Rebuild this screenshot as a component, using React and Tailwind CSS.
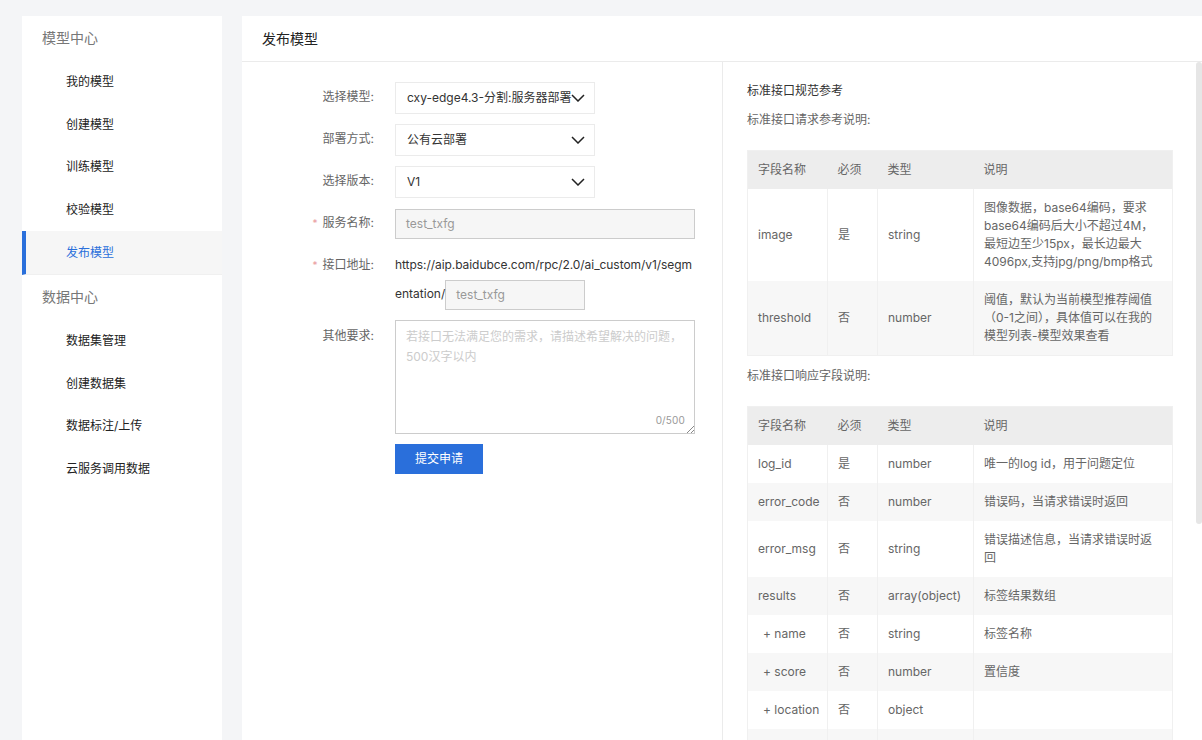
const FONT = "font-['Inter','Noto_Sans_CJK_SC',sans-serif]";

function Chevron() {
  return (
    <svg width="14" height="8" viewBox="0 0 14 8" fill="none" className="absolute right-[9px] top-[11px]">
      <path d="M1 1l6 6 6-6" stroke="#222" strokeWidth="1.5" />
    </svg>
  );
}

function Select({ value }) {
  return (
    <div className="relative flex h-8 w-[200px] items-center border border-[#ebebeb] pl-[11px] text-xs text-[#333]">
      <span className="whitespace-nowrap">{value}</span>
      <Chevron />
    </div>
  );
}

function Label({ text, required, top }) {
  return (
    <div className={`flex w-[133px] shrink-0 justify-end whitespace-nowrap pr-[21px] text-xs leading-[18px] text-[#666] ${top}`}>
      {required && <span className="mr-[5px] text-[10px] text-[#e99a9e]">*</span>}
      {text}:
    </div>
  );
}

function NavItem({ text, active, h = "h-[43px]" }) {
  return active ? (
    <div className="flex h-[44px] items-center border-b border-[#f0f0f0] border-l-4 border-l-[#2a6fdb] bg-[#f6f6f6] pl-10 text-xs text-[#2a6fdb]">{text}</div>
  ) : (
    <div className={`flex ${h} items-center pl-11 text-xs text-[#222]`}>{text}</div>
  );
}

function Table({ rows }) {
  const td = "border-r border-[#f0f0f0] pl-[10px] align-middle";
  return (
    <table className="w-[425px] table-fixed border-collapse border border-[#f0f0f0] text-xs text-[#666]">
      <colgroup>
        <col className="w-[80px]" />
        <col className="w-[50px]" />
        <col className="w-[96px]" />
        <col className="w-[199px]" />
      </colgroup>
      <thead>
        <tr className="h-[38px] bg-[#ededed] text-left">
          <th className="pl-[10px] font-normal">字段名称</th>
          <th className="pl-[10px] font-normal">必须</th>
          <th className="pl-[10px] font-normal">类型</th>
          <th className="pl-[10px] font-normal">说明</th>
        </tr>
      </thead>
      <tbody>
        {rows.map((r, i) => (
          <tr key={i} className={i % 2 ? "bg-[#f7f7f7]" : "bg-white"} style={{ height: r[4] }}>
            <td className={`${td} whitespace-nowrap`}>
              {r[5] ? <span className="pl-[5px]">{r[0]}</span> : r[0]}
            </td>
            <td className={td}>{r[1]}</td>
            <td className={`${td} whitespace-nowrap`}>{r[2]}</td>
            <td className={`${td} pr-[10px] leading-[18px]`}>{r[3]}</td>
          </tr>
        ))}
      </tbody>
    </table>
  );
}

const T1 = [
  ["image", "是", "string", "图像数据，base64编码，要求base64编码后大小不超过4M，最短边至少15px，最长边最大4096px,支持jpg/png/bmp格式", 92],
  ["threshold", "否", "number", "阈值，默认为当前模型推荐阈值（0-1之间），具体值可以在我的模型列表-模型效果查看", 75],
];

const T2 = [
  ["log_id", "是", "number", "唯一的log id，用于问题定位", 38],
  ["error_code", "否", "number", "错误码，当请求错误时返回", 38],
  ["error_msg", "否", "string", "错误描述信息，当请求错误时返回", 56],
  ["results", "否", "array(object)", "标签结果数组", 38],
  ["+ name", "否", "string", "标签名称", 38, true],
  ["+ score", "否", "number", "置信度", 38, true],
  ["+ location", "否", "object", "", 38, true],
  ["", "", "", "", 38],
];

export default function App() {
  return (
    <div className={`${FONT} flex h-[740px] w-[1202px] gap-5 overflow-hidden bg-[#f4f5f7] pl-[22px] pt-4`}>
      <aside className="h-[724px] w-[200px] shrink-0 bg-white">
        <div className="flex h-11 items-center pl-5 text-sm text-[#777]">模型中心</div>
        <NavItem text="我的模型" />
        <NavItem text="创建模型" />
        <NavItem text="训练模型" h="h-[42px]" />
        <NavItem text="校验模型" />
        <NavItem text="发布模型" active />
        <div className="flex h-[44px] items-center pl-5 text-sm text-[#777]">数据中心</div>
        <NavItem text="数据集管理" />
        <NavItem text="创建数据集" />
        <NavItem text="数据标注/上传" h="h-[42px]" />
        <NavItem text="云服务调用数据" />
      </aside>

      <main className="flex h-[724px] w-[960px] shrink-0 flex-col bg-white">
        <header className="flex h-[46px] shrink-0 items-center border-b border-[#ebebeb] pl-5 text-sm text-[#222]">发布模型</header>
        <div className="flex min-h-0 flex-1">
          <section className="flex w-[481px] shrink-0 flex-col gap-[10px] border-r border-[#ebebeb] pl-5 pt-5">
            <div className="flex"><Label text="选择模型" top="pt-[6px]" /><Select value="cxy-edge4.3-分割:服务器部署" /></div>
            <div className="flex"><Label text="部署方式" top="pt-[6px]" /><Select value="公有云部署" /></div>
            <div className="flex"><Label text="选择版本" top="pt-[6px]" /><Select value="V1" /></div>
            <div className="flex pt-[1px]">
              <Label text="服务名称" required top="pt-[5px]" />
              <div className="flex h-[30px] w-[300px] items-center border border-[#ccc] bg-[#f6f6f6] pl-[10px] text-xs text-[#999]">test_txfg</div>
            </div>
            <div className="flex">
              <Label text="接口地址" required top="pt-[7px]" />
              <div className="w-[300px] text-xs text-[#333]">
                <div className="h-[31px] whitespace-nowrap pt-[7px] leading-[18px] tracking-[-0.06px]">https://aip.baidubce.com/rpc/2.0/ai_custom/v1/segm</div>
                <div className="flex items-center">
                  <span className="relative bottom-[1px]">entation/</span>
                  <div className="flex h-[30px] w-[140px] items-center border border-[#ccc] bg-[#f6f6f6] pl-[10px] text-[#999]">test_txfg</div>
                </div>
              </div>
            </div>
            <div className="flex">
              <Label text="其他要求" top="pt-[7px]" />
              <div className="relative h-[114px] w-[300px] border border-[#ccc] px-[10px] pt-[6px] text-xs leading-5 text-[#ccc]">
                若接口无法满足您的需求，请描述希望解决的问题，500汉字以内
                <span className="absolute bottom-[7px] right-[9px] text-[10px] leading-3 tracking-[0.15px] text-[#999]">0/500</span>
                <svg width="8" height="8" viewBox="0 0 8 8" className="absolute bottom-0 right-0" stroke="#555" strokeWidth="0.7">
                  <path d="M1 8L8 1M5 8l3-3" />
                </svg>
              </div>
            </div>
            <div className="flex">
              <div className="w-[133px] shrink-0" />
              <button className="h-[30px] w-[88px] bg-[#2a6fdb] text-xs text-white">提交申请</button>
            </div>
          </section>

          <section className="relative min-w-0 flex-1 overflow-hidden pl-6 pt-5">
            <div className="text-xs leading-[18px] text-[#333]">标准接口规范参考</div>
            <div className="mt-[11px] text-xs leading-[18px] text-[#666]">标准接口请求参考说明:</div>
            <div className="mt-[21px]"><Table rows={T1} /></div>
            <div className="mt-[11px] text-xs leading-[18px] text-[#666]">标准接口响应字段说明:</div>
            <div className="mt-[21px]"><Table rows={T2} /></div>
            <div className="absolute right-0 top-0 h-[462px] w-[6px] rounded-[3px] bg-[#e6e6e6]" />
          </section>
        </div>
      </main>
    </div>
  );
}
